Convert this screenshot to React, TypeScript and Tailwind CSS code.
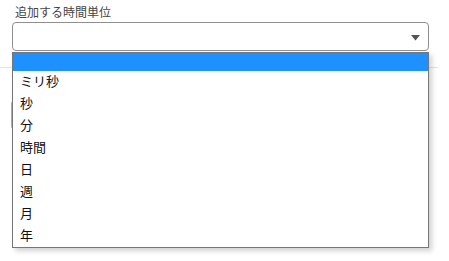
import { useState } from "react";

const units = ["", "ミリ秒", "秒", "分", "時間", "日", "週", "月", "年"];

export default function App() {
  const [active] = useState(0);

  return (
    <div className="relative w-[449px] h-[261px] bg-white overflow-hidden font-['Noto_Sans_CJK_JP','Noto_Sans',sans-serif]">
      <div className="pt-[4px] pl-[12px]">
        <div className="pl-[3px] text-[12px] leading-[16px] text-[#444]">追加する時間単位</div>
        <div className="relative mt-[2px] h-[29px] w-[417px] rounded-[4px] border border-[#8f8f8f] bg-white">
          <svg className="absolute right-[8px] top-[12px]" width="9" height="6" viewBox="0 0 9 6">
            <polygon points="0,0 9,0 4.5,5.5" fill="#555" />
          </svg>
        </div>
      </div>
      <div className="mt-[16px] h-px w-[438px] bg-[#e3e3e3]" />
      <div className="mt-[33px] ml-[11px] h-[28px] w-[300px] rounded-l-[3px] border-l-[3px] border-[#b0b0b0]" />

      <ul className="absolute left-[12px] top-[52px] w-[417px] border border-[#767676] bg-white shadow-[3px_3px_5px_rgba(0,0,0,0.18)] text-[13px] text-[#111]">
        {units.map((u, i) => (
          <li
            key={i}
            className={
              i === 0
                ? "h-[18px] " + (active === i ? "bg-[#1e90ff]" : "")
                : "h-[22px] pl-[7px] leading-[20px]"
            }
          >
            {u}
          </li>
        ))}
      </ul>
    </div>
  );
}
